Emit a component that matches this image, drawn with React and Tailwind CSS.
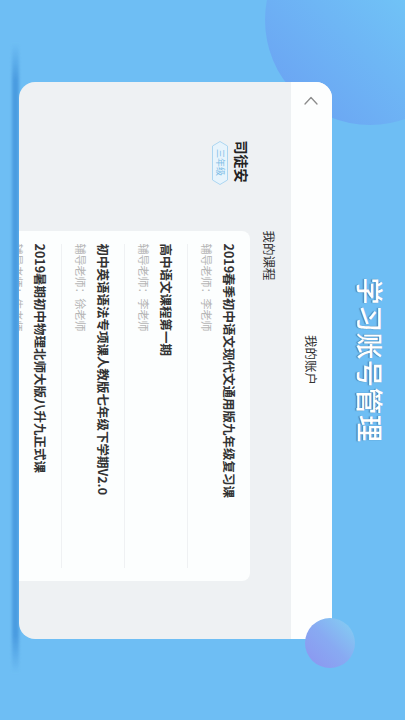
const courses = [
  { title: '2019春季初中语文现代文通用版九年级复习课', teacher: '李老师' },
  { title: '高中语文课程第一期', teacher: '李老师' },
  { title: '初中英语语法专项课人教版七年级下学期V2.0', teacher: '徐老师' },
  { title: '2019暑期初中物理北师大版八升九正式课', teacher: '牛老师' },
]

function GradeBadge() {
  return (
    <div className="relative mt-[4px] w-[44px] h-[16px] flex items-center justify-center">
      <svg className="absolute inset-0" width="44" height="16" viewBox="0 0 44 16">
        <path d="M5 0.5H39L43.5 8L39 15.5H5L0.5 8Z" fill="#e7f4fc" stroke="#acd6f1" strokeWidth="1" strokeLinejoin="round" />
      </svg>
      <span className="relative text-[9px] leading-[12px] text-[#7dbce6]">三年级</span>
    </div>
  )
}

export default function App() {
  return (
    <div className="w-[405px] h-[720px] overflow-hidden bg-[#6ebef4] font-['Noto_Sans_CJK_SC','Noto_Sans',sans-serif]">
      {/* the app was captured in landscape: lay it out 720x405 and turn it a quarter clockwise */}
      <div className="relative w-[720px] h-[405px] origin-top-left translate-x-[405px] rotate-90 bg-[#6ebef4]">
        <div className="absolute -left-[85px] -top-[70px] w-[210px] h-[210px] rounded-full bg-linear-to-br from-[#74d8f8] to-[#6a9ef2]" />
        <div className="absolute left-[43px] top-[386px] w-[630px] h-[7px] blur-[1.5px] bg-[linear-gradient(to_right,transparent,#4a9ce0_6%,#4a9ce0_94%,transparent)]" />

        <div className="relative flex flex-col items-center pt-[15px]">
          <h1 className="text-[27px] leading-[40px] font-medium text-white tracking-[0.5px] [text-shadow:0_1px_1px_rgba(40,60,80,0.6)]">学习账号管理</h1>

          <div className="mt-[18px] w-[557px] h-[313px] rounded-[16px] overflow-hidden bg-[#eef1f3] flex flex-col">
            <div className="h-[41px] shrink-0 bg-[#fdfefe] grid grid-cols-[1fr_auto_1fr] items-center">
              <div className="pl-[14px] flex items-center">
                <svg width="9" height="14" viewBox="0 0 9 14" fill="none">
                  <path d="M8 1L1.5 7L8 13" stroke="#8c8c8c" strokeWidth="1.3" strokeLinecap="round" strokeLinejoin="round" />
                </svg>
              </div>
              <span className="text-[12.5px] leading-[18px] text-[#333]">我的账户</span>
              <div />
            </div>

            <div className="flex flex-1">
              <div className="w-[149px] shrink-0 pl-[59px] pt-[39px]">
                <p className="text-[14px] leading-[20px] font-bold text-[#222]">司徒安</p>
                <GradeBadge />
              </div>

              <div className="w-[350px] shrink-0 pt-[13px]">
                <p className="text-[12.5px] leading-[18px] text-[#333]">我的课程</p>
                <div className="mt-[10px] bg-[#fcfefe] rounded-t-[8px] px-[13px]">
                  {courses.map((c, i) => (
                    <div key={i} className={i < courses.length - 1 ? 'pt-[12px] pb-[11px] border-b border-[#eff1f3]' : 'pt-[12px] pb-[11px]'}>
                      <p className="text-[12.5px] leading-[18px] font-semibold text-[#333] whitespace-nowrap">{c.title}</p>
                      <p className="mt-[6px] text-[11px] leading-[15px] text-[#b5b5b5]">辅导老师：{c.teacher}</p>
                    </div>
                  ))}
                </div>
              </div>
            </div>
          </div>
        </div>

        <div className="absolute left-[618px] top-[50px] w-[50px] h-[50px] rounded-full bg-linear-to-br from-[#82d2f2] via-[#88aaf2] to-[#8c94f0]" />
      </div>
    </div>
  )
}
